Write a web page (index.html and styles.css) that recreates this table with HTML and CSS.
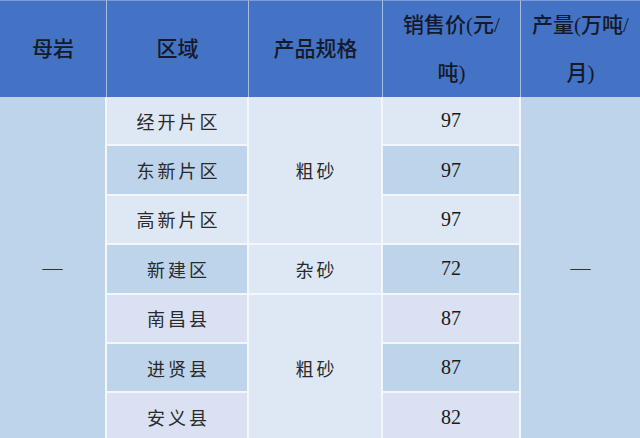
FILE: index.html
```html
<!DOCTYPE html>
<html lang="zh">
<head>
<meta charset="utf-8">
<title>价格表</title>
<link rel="stylesheet" href="styles.css">
</head>
<body>
<table class="price-table">
  <colgroup>
    <col class="c1"><col class="c2"><col class="c3"><col class="c4"><col class="c5">
  </colgroup>
  <thead>
    <tr class="head-row">
      <th>母岩</th>
      <th>区域</th>
      <th>产品规格</th>
      <th>销售价(元/<br>吨)</th>
      <th class="last">产量(万吨/<br>月)</th>
    </tr>
  </thead>
  <tbody>
    <tr>
      <td class="dark dash" rowspan="7">—</td>
      <td class="zh light">经开片区</td>
      <td class="zh light" rowspan="3">粗砂</td>
      <td class="num light">97</td>
      <td class="dark dash last" rowspan="7">—</td>
    </tr>
    <tr>
      <td class="zh dark">东新片区</td>
      <td class="num dark">97</td>
    </tr>
    <tr>
      <td class="zh light">高新片区</td>
      <td class="num light">97</td>
    </tr>
    <tr>
      <td class="zh dark">新建区</td>
      <td class="zh light">杂砂</td>
      <td class="num dark">72</td>
    </tr>
    <tr>
      <td class="zh lav">南昌县</td>
      <td class="zh light" rowspan="3">粗砂</td>
      <td class="num lav">87</td>
    </tr>
    <tr>
      <td class="zh dark">进贤县</td>
      <td class="num dark">87</td>
    </tr>
    <tr>
      <td class="zh lav">安义县</td>
      <td class="num lav">82</td>
    </tr>
  </tbody>
</table>
</body>
</html>
```

FILE: styles.css
```css
html, body {
  margin: 0;
  padding: 0;
  background: #ffffff;
  overflow: hidden;
}

.price-table {
  width: 640px;
  table-layout: fixed;
  border-collapse: separate;
  border-spacing: 0;
}

.c1 { width: 107px; }
.c2 { width: 142px; }
.c3 { width: 134px; }
.c4 { width: 138px; }
.c5 { width: 119px; }

.head-row {
  height: 97px;
}

.head-row th {
  background: #4472c4;
  color: #141a2a;
  font-family: "Liberation Serif", "Noto Sans CJK SC", serif;
  font-weight: 500;
  font-size: 21px;
  line-height: 48px;
  text-align: center;
  vertical-align: middle;
  padding: 0;
  border-right: 1px solid #a7bde4;
  border-top: 1px solid #7d9bd4;
}

.head-row th.last {
  border-right: none;
}

tbody tr {
  height: 49.4px;
}

tbody td {
  padding: 0;
  text-align: center;
  vertical-align: middle;
  color: #222222;
  border-right: 2px solid #f3f7fc;
  border-bottom: 2px solid #f3f7fc;
}

tbody td.last {
  border-right: none;
}

.zh {
  font-family: "Noto Sans CJK SC", sans-serif;
  font-size: 18px;
  letter-spacing: 3px;
  text-indent: 3px;
  color: #2a2a2a;
}

.num {
  font-family: "Liberation Serif", serif;
  font-size: 20px;
  color: #1a1a1a;
}

.dash {
  font-family: "Liberation Serif", serif;
  font-size: 20px;
  color: #333333;
}

.light { background: #dee8f4; }
.dark  { background: #bdd4eb; }
.lav   { background: #d9e1f2; }
```
